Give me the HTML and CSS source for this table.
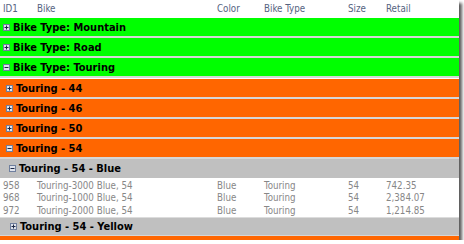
FILE: index.html
```html
<!DOCTYPE html>
<html lang="en">
<head>
  <meta charset="UTF-8" />
  <title>Bikes</title>
  <link rel="stylesheet" href="styles.css">
</head>
<body>
  <div class="grid-frame">
    <div class="grid">
      <div class="row header">
        <span class="c-id">ID1</span>
        <span class="c-bike">Bike</span>
        <span class="c-color">Color</span>
        <span class="c-type">Bike Type</span>
        <span class="c-size">Size</span>
        <span class="c-retail">Retail</span>
      </div>

      <div class="group lvl1"><svg class="tog" viewBox="0 0 7 7"><rect x="0.5" y="0.5" width="6" height="6" fill="#dfe3ec" stroke="#6f7f9e"/><path d="M1.5 3.5h4M3.5 1.5v4" stroke="#1c2846" stroke-width="1"/></svg>Bike Type: Mountain</div>
      <div class="group lvl1"><svg class="tog" viewBox="0 0 7 7"><rect x="0.5" y="0.5" width="6" height="6" fill="#dfe3ec" stroke="#6f7f9e"/><path d="M1.5 3.5h4M3.5 1.5v4" stroke="#1c2846" stroke-width="1"/></svg>Bike Type: Road</div>
      <div class="group lvl1"><svg class="tog" viewBox="0 0 7 7"><rect x="0.5" y="0.5" width="6" height="6" fill="#dfe3ec" stroke="#6f7f9e"/><path d="M1.5 3.5h4" stroke="#1c2846" stroke-width="1"/></svg>Bike Type: Touring</div>

      <div class="group lvl2 first"><svg class="tog" viewBox="0 0 7 7"><rect x="0.5" y="0.5" width="6" height="6" fill="#dfe3ec" stroke="#6f7f9e"/><path d="M1.5 3.5h4M3.5 1.5v4" stroke="#1c2846" stroke-width="1"/></svg>Touring - 44</div>
      <div class="group lvl2"><svg class="tog" viewBox="0 0 7 7"><rect x="0.5" y="0.5" width="6" height="6" fill="#dfe3ec" stroke="#6f7f9e"/><path d="M1.5 3.5h4M3.5 1.5v4" stroke="#1c2846" stroke-width="1"/></svg>Touring - 46</div>
      <div class="group lvl2"><svg class="tog" viewBox="0 0 7 7"><rect x="0.5" y="0.5" width="6" height="6" fill="#dfe3ec" stroke="#6f7f9e"/><path d="M1.5 3.5h4M3.5 1.5v4" stroke="#1c2846" stroke-width="1"/></svg>Touring - 50</div>
      <div class="group lvl2"><svg class="tog" viewBox="0 0 7 7"><rect x="0.5" y="0.5" width="6" height="6" fill="#dfe3ec" stroke="#6f7f9e"/><path d="M1.5 3.5h4" stroke="#1c2846" stroke-width="1"/></svg>Touring - 54</div>

      <div class="group lvl3"><svg class="tog" viewBox="0 0 7 7"><rect x="0.5" y="0.5" width="6" height="6" fill="#dfe3ec" stroke="#6f7f9e"/><path d="M1.5 3.5h4" stroke="#1c2846" stroke-width="1"/></svg>Touring - 54 - Blue</div>
      <div class="rows">
        <div class="row item">
          <span class="c-id">958</span>
          <span class="c-bike">Touring-3000 Blue, 54</span>
          <span class="c-color">Blue</span>
          <span class="c-type">Touring</span>
          <span class="c-size">54</span>
          <span class="c-retail">742.35</span>
        </div>
        <div class="row item">
          <span class="c-id">968</span>
          <span class="c-bike">Touring-1000 Blue, 54</span>
          <span class="c-color">Blue</span>
          <span class="c-type">Touring</span>
          <span class="c-size">54</span>
          <span class="c-retail">2,384.07</span>
        </div>
        <div class="row item">
          <span class="c-id">972</span>
          <span class="c-bike">Touring-2000 Blue, 54</span>
          <span class="c-color">Blue</span>
          <span class="c-type">Touring</span>
          <span class="c-size">54</span>
          <span class="c-retail">1,214.85</span>
        </div>
      </div>
      <div class="group lvl3 yellow"><svg class="tog" viewBox="0 0 7 7"><rect x="0.5" y="0.5" width="6" height="6" fill="#dfe3ec" stroke="#6f7f9e"/><path d="M1.5 3.5h4M3.5 1.5v4" stroke="#1c2846" stroke-width="1"/></svg>Touring - 54 - Yellow</div>
      <div class="group lvl2"></div>
    </div>
  </div>
</body>
</html>
```

FILE: styles.css
```css
* {
  box-sizing: border-box;
}

body {
  margin: 0;
  padding: 0;
  background: #fff;
  font-family: "DejaVu Sans Condensed", "DejaVu Sans", sans-serif;
  font-stretch: condensed;
  font-size: 9.7px;
}

.grid-frame {
  width: 459px;
  height: 240px;
  overflow: hidden;
  background: #fff;
  box-shadow: 3px 3px 3px rgba(0, 0, 0, 0.65);
}

.grid {
  display: flex;
  flex-direction: column;
}

.row {
  display: flex;
  align-items: center;
  white-space: nowrap;
}

.row span {
  flex: none;
}

.c-id { width: 37px; padding-left: 3px; }
.c-bike { width: 180px; }
.c-color { width: 47px; }
.c-type { width: 84px; }
.c-size { width: 38px; }
.c-retail { flex: 1; }

.header {
  height: 18px;
  color: #55637f;
  padding-bottom: 2px;
}

.group {
  display: flex;
  align-items: center;
  gap: 3px;
  height: 20px;
  font-size: 11px;
  font-weight: bold;
  color: #000;
  border-bottom: 2px solid #d6d6d6;
  flex: none;
}

.tog {
  width: 7px;
  height: 7px;
  flex: none;
}

.lvl1 {
  background: #00ff00;
  padding-left: 3px;
}

.lvl2 {
  background: #ff6600;
  padding-left: 6px;
}

.lvl2.first {
  margin-top: 1px;
}

.lvl3 {
  background: #c0c0c0;
  padding-left: 9px;
  height: 19px;
  border-bottom: none;
}

.yellow {
  padding-left: 10px;
  border-top: 1px solid #dcdcdc;
  border-bottom: 1px solid #d6d6d6;
}

.rows {
  background: #fff;
  padding: 1px 0 0;
}

.item {
  height: 12.5px;
  color: #878787;
}
```
